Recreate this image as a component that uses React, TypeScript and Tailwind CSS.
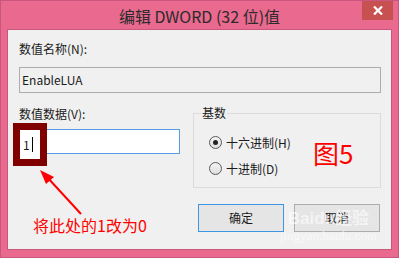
import React from "react";

export default function App() {
  const font = { fontFamily: '"Noto Sans CJK SC", "Noto Sans", sans-serif' };
  return (
    <div
      className="relative w-[399px] h-[258px] bg-[#e9698f] border border-[#c8577d] flex flex-col overflow-hidden"
      style={font}
    >
      {/* Title bar */}
      <div className="relative h-[28px] flex items-center justify-center pt-[1px] text-[16px] text-[#2b2b2b] leading-none">
        <span>编辑 DWORD (32 位)值</span>
        <div className="absolute top-[-1px] right-[5px] w-[31px] h-[20px] bg-[#c75050] flex items-center justify-center">
          <svg width="10" height="9" viewBox="0 0 10 9">
            <path d="M1 0.5 L9 8.5 M9 0.5 L1 8.5" stroke="#ffffff" strokeWidth="2.2" />
          </svg>
        </div>
      </div>

      {/* Content */}
      <div className="relative mx-[6px] h-[221px] border border-[#c8577d] bg-[#f0f0f0] flex flex-col pl-[11px] pr-[10px] pt-[10px] text-[12px] text-[#1a1a1a]">
        <div className="h-[18px] leading-[18px]">数值名称(N):</div>
        <div className="mt-[9px] h-[26px] border border-[#adadad] bg-[#f0f0f0] flex items-center pl-[2px]">
          EnableLUA
        </div>

        <div className="mt-[12px] flex">
          <div className="flex flex-col">
            <div className="h-[18px] leading-[18px]">数值数据(V):</div>
            <div className="mt-[6px] h-[25px] w-[161px] border border-[#569de5] bg-white" />
          </div>
          <div className="relative ml-[13px] mt-[8px] w-[189px] h-[75px] border border-[#dcdcdc] pt-[22px] pl-[15px]">
            <span className="absolute left-[7px] top-[-10px] px-[1px] bg-[#f0f0f0] leading-[18px]">基数</span>
            <div className="flex items-center h-[13px]">
              <span className="w-[13px] h-[13px] rounded-full border border-[#5a5a5a] bg-gradient-to-b from-[#f4f4f4] to-[#dedede] flex items-center justify-center">
                <span className="w-[5px] h-[5px] rounded-full bg-[#222]" />
              </span>
              <span className="ml-[4px] leading-[18px]">十六进制(H)</span>
            </div>
            <div className="flex items-center h-[13px] mt-[13px]">
              <span className="w-[13px] h-[13px] rounded-full border border-[#5a5a5a] bg-gradient-to-b from-[#f4f4f4] to-[#dedede]" />
              <span className="ml-[4px] leading-[18px]">十进制(D)</span>
            </div>
            <span className="absolute left-[119px] top-[24px] text-[26px] leading-[30px] text-[#ff0000]">图5</span>
          </div>
        </div>

        <div className="mt-[16px] flex justify-end gap-[10px] pr-[1px]">
          <div className="w-[86px] h-[28px] border border-[#3d95e3] bg-[#e5e5e5] flex items-center justify-center">
            确定
          </div>
          <div className="w-[86px] h-[28px] border border-[#acacac] bg-[#e5e5e5] flex items-center justify-center">
            取消
          </div>
        </div>

        {/* watermark */}
        <div className="absolute left-[272px] top-[180px] flex flex-col items-center text-white/60 leading-none pointer-events-none">
          <span className="text-[17px] font-bold" style={{ fontFamily: '"Liberation Sans", "Noto Sans CJK SC", sans-serif' }}>Baidu经验</span>
          <span className="text-[13px] mt-[2px]" style={{ fontFamily: '"Liberation Serif", serif' }}>jingyan.baidu.com</span>
        </div>

        {/* annotation box */}
        <div className="absolute left-[5px] top-[93px] w-[34px] h-[43px] border-[7px] border-[#800000] bg-white flex items-center pl-[3px]">
          <span className="text-[12px] text-[#1a1a1a]">1</span>
          <span className="ml-[2px] w-[1px] h-[15px] bg-black" />
        </div>

        {/* annotation text */}
        <span className="absolute left-[25px] top-[185px] text-[16px] leading-[20px] text-[#ff0000]">将此处的1改为0</span>
      </div>

      {/* arrow */}
      <svg className="absolute left-0 top-0 pointer-events-none" width="399" height="258">
        <line x1="80" y1="213" x2="46" y2="176" stroke="#ff0000" strokeWidth="2" />
        <polygon points="39,169 53,176 45,183" fill="#ff0000" />
      </svg>
    </div>
  );
}
